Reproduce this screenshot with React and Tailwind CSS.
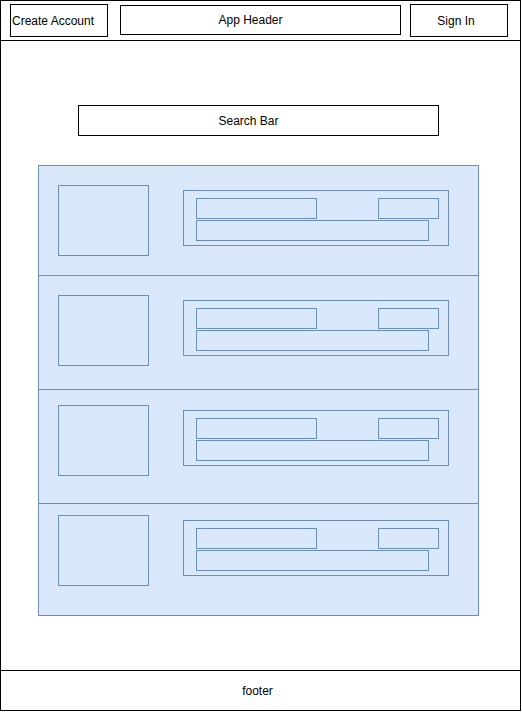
const rows = [
  { height: 'h-[109px]', pad: 'pt-[19px]', first: true },
  { height: 'h-[114px]', pad: 'pt-[19px]' },
  { height: 'h-[114px]', pad: 'pt-[15px]' },
  { height: 'h-[112px]', pad: 'pt-[11px]' },
];

const ListRow = ({ height, pad, first }) => (
  <div className={`flex items-start pl-[19px] ${height} ${pad} ${first ? '' : 'border-t border-[#6c8ebf]'}`}>
    <div className="w-[91px] h-[71px] border border-[#6c8ebf] bg-[#dae8fc]" />
    <div className="ml-[34px] mt-[5px] w-[266px] h-[56px] border border-[#6c8ebf] pl-[12px] pt-[7px] flex flex-col">
      <div className="flex">
        <div className="w-[121px] h-[21px] border border-[#6c8ebf]" />
        <div className="ml-[61px] w-[61px] h-[21px] border border-[#6c8ebf]" />
      </div>
      <div className="mt-px w-[233px] h-[21px] border border-[#6c8ebf]" />
    </div>
  </div>
);

export default function App() {
  return (
    <div className="w-[522px] h-[712px] bg-white text-black text-[12px] font-['Liberation_Sans',Arial,sans-serif]">
      <div className="w-[521px] h-[711px] border border-black flex flex-col">
        <header className="h-[40px] shrink-0 border-b border-black flex items-center">
          <div className="ml-[9px] w-[98px] h-[33px] border border-black flex items-center pl-px">
            Create Account
          </div>
          <div className="ml-[12px] self-start mt-[4px] w-[281px] h-[30px] border border-black flex items-center justify-center pr-[20px]">
            App Header
          </div>
          <div className="ml-[9px] w-[98px] h-[33px] border border-black flex items-center justify-center pr-[6px]">
            Sign In
          </div>
        </header>

        <main className="flex-1 flex flex-col">
          <div className="ml-[77px] mt-[64px] w-[361px] h-[31px] border border-black flex items-center justify-center pr-[20px]">
            Search Bar
          </div>
          <div className="ml-[37px] mt-[29px] w-[441px] h-[451px] border border-[#6c8ebf] bg-[#dae8fc] flex flex-col">
            {rows.map((r, i) => (
              <ListRow key={i} {...r} />
            ))}
          </div>
        </main>

        <footer className="h-[40px] shrink-0 border-t border-black flex items-center justify-center pr-[6px]">
          footer
        </footer>
      </div>
    </div>
  );
}
